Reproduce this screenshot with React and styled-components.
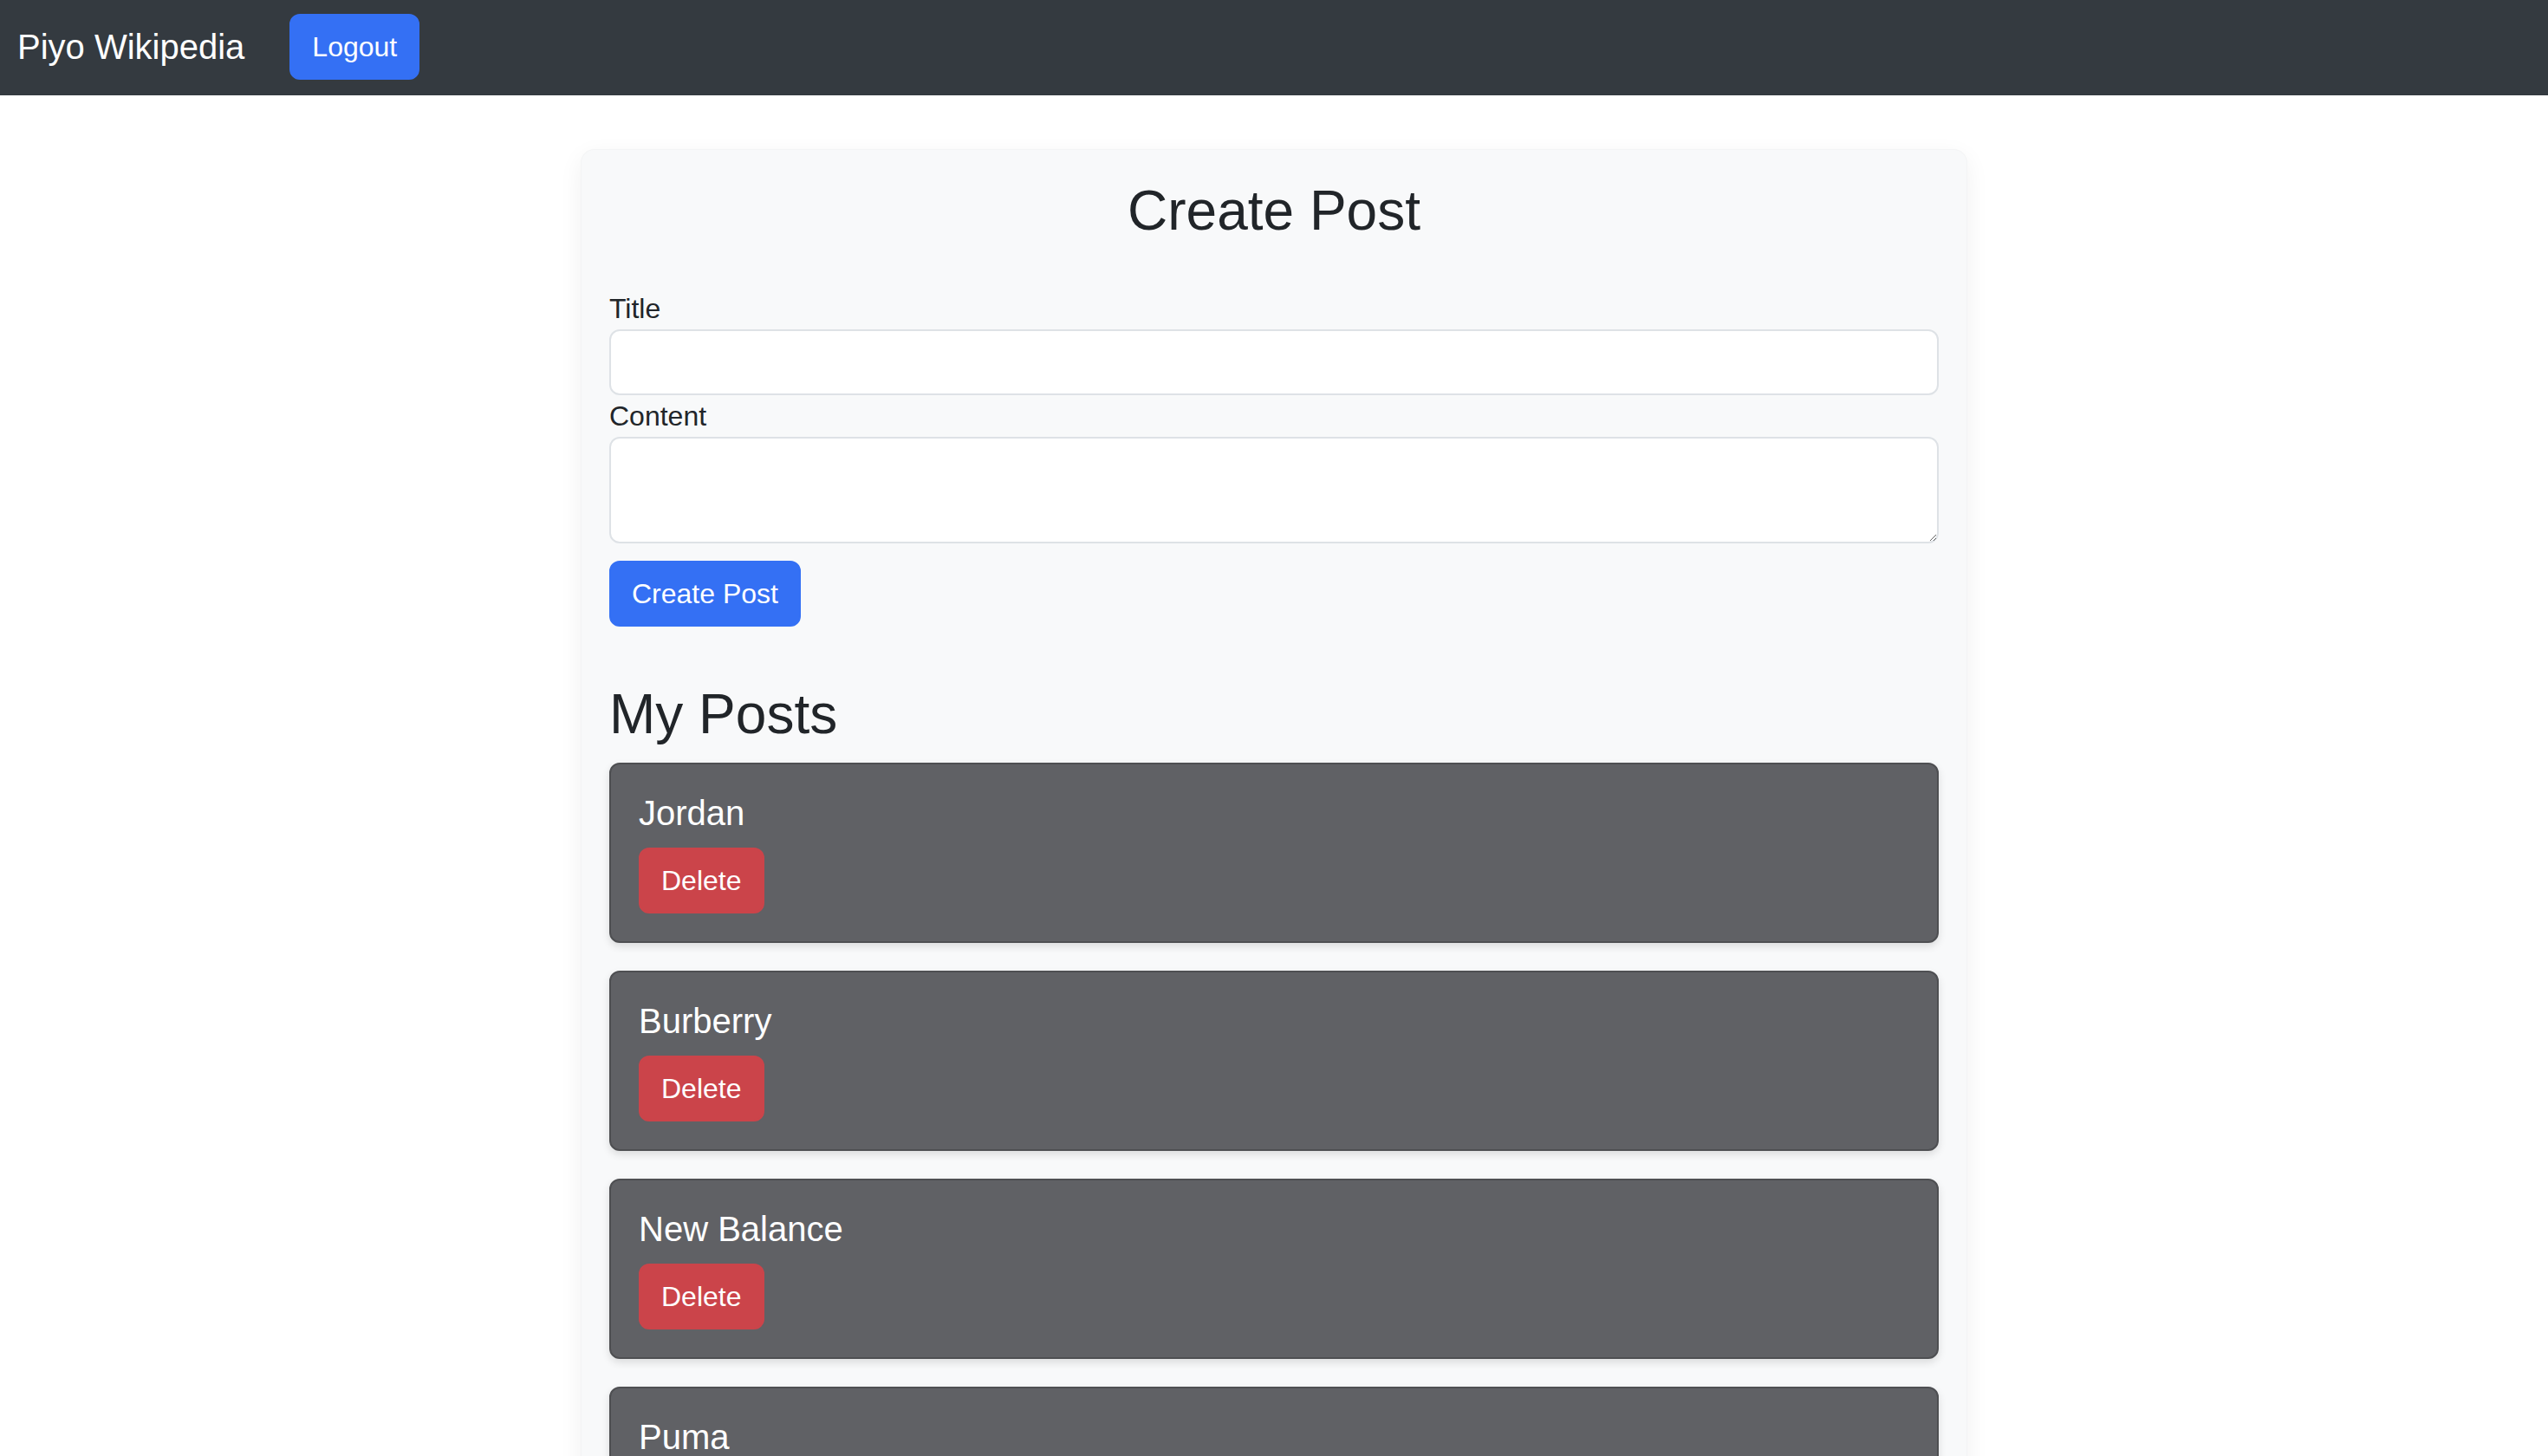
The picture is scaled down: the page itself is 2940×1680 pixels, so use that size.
import styled, { createGlobalStyle } from "styled-components";

const posts = ["Jordan", "Burberry", "New Balance", "Puma"];

const COLORS = {
    NAV: "#343a40",
    PRIMARY: "#3470f4",
    DANGER: "#cb444a",
    TEXT: "#212529",
    LIGHT: "#f8f9fa",
    BORDER: "#dee2e6",
    POST: "#606165",
    POST_BORDER: "#4e4f52",
};

const GlobalStyle = createGlobalStyle`
    body {
        margin: 0;
        background: #ffffff;
        color: ${COLORS.TEXT};
        font-family: "Liberation Sans", Arial, sans-serif;
        font-size: 32px;
        line-height: 1.5;
    }
    * {
        box-sizing: border-box;
    }
`;

export default function App() {
    return (
        <>
            <GlobalStyle />
            <Navbar>
                <Brand>Piyo Wikipedia</Brand>
                <Button $variant="primary">Logout</Button>
            </Navbar>
            <Card>
                <PageTitle>Create Post</PageTitle>
                <Form onSubmit={(e) => e.preventDefault()}>
                    <Label htmlFor="title">Title</Label>
                    <TextInput id="title" type="text" />
                    <Label htmlFor="content">Content</Label>
                    <TextArea id="content" />
                    <SubmitRow>
                        <Button $variant="primary" type="submit">
                            Create Post
                        </Button>
                    </SubmitRow>
                </Form>
                <SectionTitle>My Posts</SectionTitle>
                {posts.map((title) => (
                    <PostCard key={title}>
                        <PostTitle>{title}</PostTitle>
                        <Button $variant="danger">Delete</Button>
                    </PostCard>
                ))}
            </Card>
        </>
    );
}

const Navbar = styled.nav`
    display: flex;
    align-items: flex-start;
    gap: 52px;

    height: 110px;
    padding: 16px 20px 0 20px;

    background: ${COLORS.NAV};
`;

const Brand = styled.a`
    margin-top: 8px;
    color: #ffffff;
    font-size: 40px;
    line-height: 1.5;
    text-decoration: none;
`;

const Button = styled.button`
    display: inline-block;
    padding: 12px 24px;

    font-family: inherit;
    font-size: 32px;
    line-height: 1.5;
    color: #ffffff;

    background: ${(p) => (p.$variant === "danger" ? COLORS.DANGER : COLORS.PRIMARY)};
    border: 2px solid ${(p) => (p.$variant === "danger" ? COLORS.DANGER : COLORS.PRIMARY)};
    border-radius: 12px;
    cursor: pointer;
`;

const Card = styled.main`
    width: 1600px;
    margin: 62px auto 0 auto;
    padding: 32px;

    background: ${COLORS.LIGHT};
    border: 1px solid rgba(0, 0, 0, 0.02);
    border-radius: 16px;
    box-shadow: 0 8px 28px rgba(0, 0, 0, 0.06);
`;

const PageTitle = styled.h2`
    margin: 0 0 50px 0;
    font-size: 64px;
    font-weight: 500;
    line-height: 1.2;
    text-align: center;
`;

const Form = styled.form`
    display: flex;
    flex-direction: column;
`;

const Label = styled.label`
    display: block;
    font-size: 32px;
    line-height: 1.5;
`;

const TextInput = styled.input`
    display: block;
    width: 100%;
    height: 76px;
    padding: 12px 24px;

    font-family: inherit;
    font-size: 32px;

    background: #ffffff;
    border: 2px solid ${COLORS.BORDER};
    border-radius: 12px;
    &:focus {
        outline: none;
    }
`;

const TextArea = styled.textarea`
    display: block;
    width: 100%;
    height: 123px;
    padding: 12px 24px;

    font-family: inherit;
    font-size: 32px;

    background: #ffffff;
    border: 2px solid ${COLORS.BORDER};
    border-radius: 12px;
    &:focus {
        outline: none;
    }
`;

const SubmitRow = styled.div`
    margin-top: 20px;
`;

const SectionTitle = styled.h2`
    margin: 63px 0 17px 0;
    font-size: 64px;
    font-weight: 500;
    line-height: 1.2;
`;

const PostCard = styled.div`
    margin-bottom: 32px;
    padding: 32px;

    background: ${COLORS.POST};
    border: 2px solid ${COLORS.POST_BORDER};
    border-radius: 12px;
    box-shadow: 0 4px 10px rgba(0, 0, 0, 0.12);
`;

const PostTitle = styled.h5`
    margin: 0 0 16px 0;
    color: #ffffff;
    font-size: 40px;
    font-weight: 500;
    line-height: 1.2;
`;
